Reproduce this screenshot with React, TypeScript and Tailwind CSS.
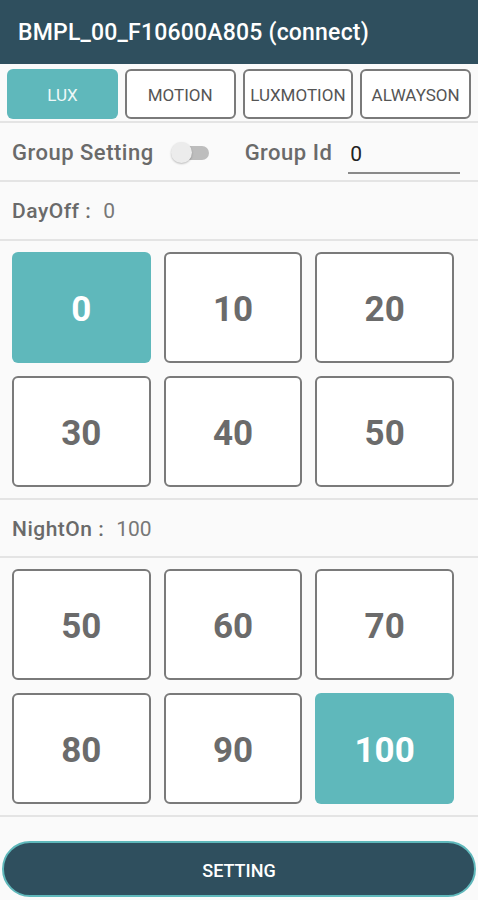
import { useState } from 'react';

const MODES = ['LUX', 'MOTION', 'LUXMOTION', 'ALWAYSON'];
const DAY_OFF = [0, 10, 20, 30, 40, 50];
const NIGHT_ON = [50, 60, 70, 80, 90, 100];

function ValueGrid({ values, selected, onPick }: { values: number[]; selected: number; onPick: (v: number) => void }) {
  return (
    <div className="grid grid-cols-3 gap-x-[13px] gap-y-[13px] pl-[12px] pr-[24px] py-[11px]">
      {values.map((v) => (
        <button
          key={v}
          onClick={() => onPick(v)}
          className={
            v === selected
              ? 'h-[111px] pt-[5px] rounded-[6px] bg-[#5fb8bb] text-white text-[35px] font-bold'
              : 'h-[111px] pt-[5px] rounded-[6px] bg-white border-2 border-[#7a7a7a] text-[#6b6b6b] text-[35px] font-bold'
          }
        >
          {v}
        </button>
      ))}
    </div>
  );
}

function Divider() {
  return <div className="h-[2px] bg-[#e4e4e4]" />;
}

export default function App() {
  const [mode, setMode] = useState('LUX');
  const [dayOff, setDayOff] = useState(0);
  const [nightOn, setNightOn] = useState(100);

  return (
    <div className="w-[478px] h-[900px] bg-[#fafafa] flex flex-col overflow-hidden" style={{ fontFamily: 'Roboto, "Liberation Sans", sans-serif' }}>
      <div className="h-16 bg-[#2f4f5e] flex items-center px-[18px] pt-[3px] shrink-0">
        <h1 className="text-white text-[23px] font-medium tracking-[0.2px]">BMPL_00_F10600A805 (connect)</h1>
      </div>

      <div className="grid grid-cols-4 gap-[7px] px-[7px] pt-[5px] pb-[2px] h-[57px]">
        {MODES.map((m) => (
          <button
            key={m}
            onClick={() => setMode(m)}
            className={
              m === mode
                ? 'h-[50px] pt-[4px] rounded-[6px] bg-[#5fb8bb] text-[#eef8f8] text-[17px]'
                : 'h-[50px] pt-[4px] rounded-[6px] bg-white border-2 border-[#7a7a7a] text-[#555] text-[17px] whitespace-nowrap'
            }
          >
            {m}
          </button>
        ))}
      </div>
      <Divider />

      <div className="h-[57px] flex items-center px-[12px] pt-[2px]">
        <span className="text-[22px] font-medium text-[#6a6a6a] tracking-[0.5px]">Group Setting</span>
        <div className="relative ml-[17px] w-[38px] h-[22px] flex items-center">
          <div className="absolute left-[12px] right-0 h-[14px] rounded-full bg-[#bdbdbd]" />
          <div className="absolute left-0 w-[21px] h-[21px] rounded-full bg-[#ececec] shadow-[0_1px_2px_rgba(0,0,0,0.25)]" />
        </div>
        <span className="ml-[36px] text-[22px] font-medium text-[#6a6a6a] tracking-[0.5px]">Group Id</span>
        <div className="ml-[16px] w-[112px] border-b-2 border-[#8a8a8a] pb-[2px] mt-[8px]">
          <span className="ml-[2px] text-[21px] text-[#222]">0</span>
        </div>
      </div>
      <Divider />

      <div className="h-[57px] flex items-center px-[12px] pt-[3px] gap-[12px]">
        <span className="text-[21px] font-medium text-[#6a6a6a] tracking-[0.5px]">DayOff :</span>
        <span className="text-[21px] text-[#777]">{dayOff}</span>
      </div>
      <Divider />
      <ValueGrid values={DAY_OFF} selected={dayOff} onPick={setDayOff} />
      <Divider />

      <div className="h-[56px] flex items-center px-[12px] pt-[4px] gap-[12px]">
        <span className="text-[21px] font-medium text-[#6a6a6a] tracking-[0.5px]">NightOn :</span>
        <span className="text-[21px] text-[#777]">{nightOn}</span>
      </div>
      <Divider />
      <ValueGrid values={NIGHT_ON} selected={nightOn} onPick={setNightOn} />
      <Divider />

      <div className="px-[2px] pt-[24px]">
        <button className="w-full h-[56px] pt-[2px] rounded-full bg-[#2f4f5e] border-2 border-[#5fb8bb] text-white text-[18px] font-medium">
          SETTING
        </button>
      </div>
    </div>
  );
}
